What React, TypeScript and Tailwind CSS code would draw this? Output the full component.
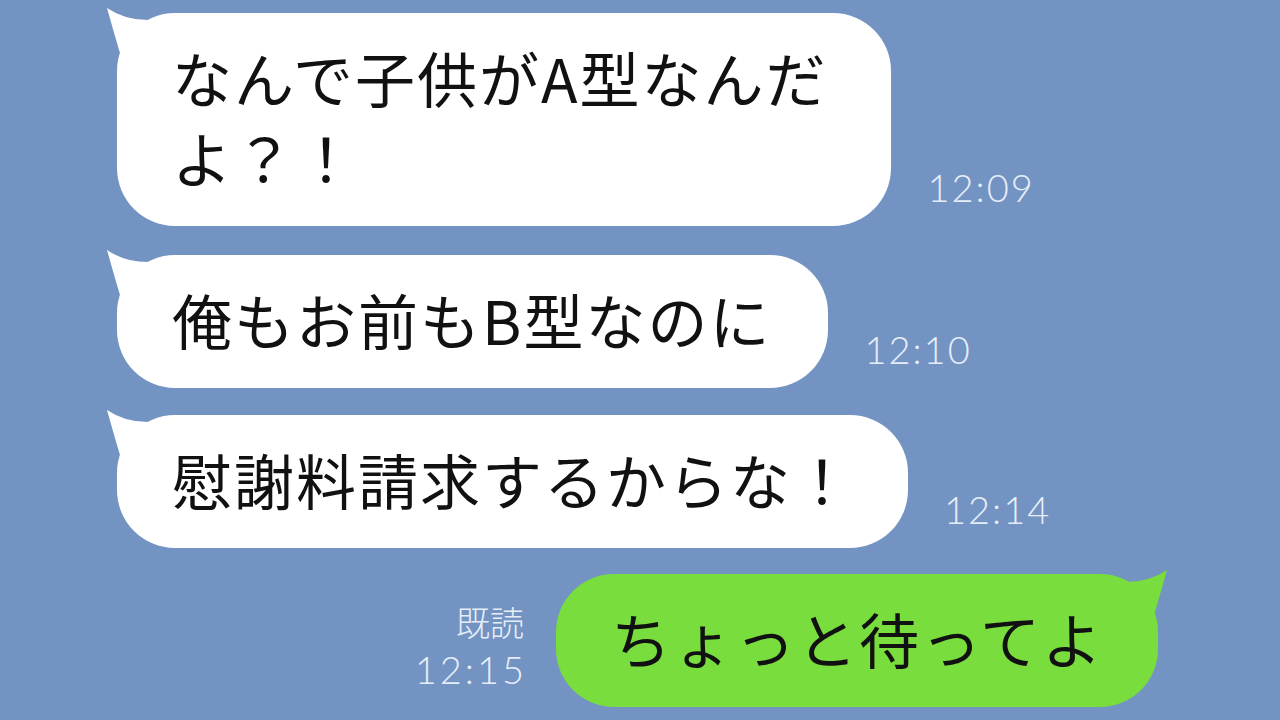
import React from "react";

const jp = { fontFamily: '"Noto Sans CJK JP", "Noto Sans", sans-serif' };
const num = { fontFamily: 'Lato, "Noto Sans", sans-serif' };

const LeftTail = () => (
  <svg className="absolute -left-[11px] -top-[6px]" width="60" height="60" viewBox="0 0 60 60">
    <path d="M1 1 Q 8 26 14 46 L 50 46 L 46 13 Q 20 14 1 1 Z" fill="#ffffff" />
  </svg>
);

const RightTail = () => (
  <svg className="absolute -right-[10px] -top-[5px]" width="60" height="60" viewBox="0 0 60 60">
    <path d="M59 1 Q 52 26 46 46 L 10 46 L 14 13 Q 40 14 59 1 Z" fill="#79dd3e" />
  </svg>
);

const Time = ({ t }: { t: string }) => (
  <div className="ml-[36px] pb-[17px] text-[38px] leading-[44px] font-light text-[#e6eef8] tracking-[2px]" style={num}>
    {t}
  </div>
);

const Incoming = ({
  children,
  time,
  mt,
  pr,
}: {
  children: React.ReactNode;
  time: string;
  mt: string;
  pr: string;
}) => (
  <div className={`flex items-end ${mt}`}>
    <div className="relative">
      <LeftTail />
      <div
        className={`relative bg-white rounded-[58px] pl-[55px] ${pr} pt-[24px] pb-[29px] text-[60px] leading-[80px] tracking-[2px] text-[#111] whitespace-nowrap`}
        style={jp}
      >
        {children}
      </div>
    </div>
    <Time t={time} />
  </div>
);

export default function App() {
  return (
    <div className="w-[1280px] h-[720px] overflow-hidden bg-[#7393c3] pl-[117px] pt-[13px]">
      <Incoming time="12:09" mt="mt-0" pr="pr-[64px]">
        なんで子供がA型なんだ
        <br />
        よ？！
      </Incoming>
      <Incoming time="12:10" mt="mt-[29px]" pr="pr-[57px]">
        俺もお前もB型なのに
      </Incoming>
      <Incoming time="12:14" mt="mt-[27px]" pr="pr-[54px]">
        慰謝料請求するからな！
      </Incoming>
      <div className="flex items-end justify-end mt-[26px] pr-[122px]">
        <div className="mr-[32px] pb-[15px] flex flex-col items-end text-[#e6eef8]">
          <div className="text-[34px] leading-[40px] font-light mb-[4px]" style={jp}>
            既読
          </div>
          <div className="text-[38px] leading-[46px] font-light tracking-[3px] -mr-[3px]" style={num}>
            12:15
          </div>
        </div>
        <div className="relative">
          <RightTail />
          <div
            className="relative bg-[#79dd3e] rounded-[58px] pl-[55px] pr-[54px] pt-[24px] pb-[29px] text-[60px] leading-[80px] tracking-[2px] text-[#111] whitespace-nowrap"
            style={jp}
          >
            ちょっと待ってよ
          </div>
        </div>
      </div>
    </div>
  );
}
